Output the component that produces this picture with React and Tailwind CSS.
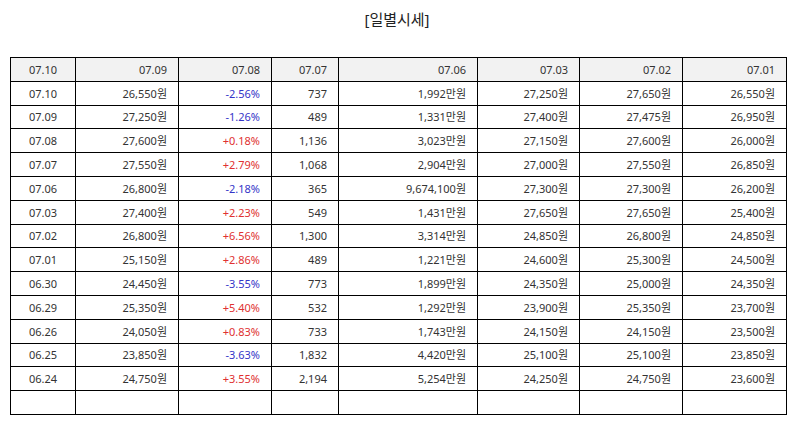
const header = ["07.10", "07.09", "07.08", "07.07", "07.06", "07.03", "07.02", "07.01"];

const rows = [
  ["07.10", "26,550원", "-2.56%", "737", "1,992만원", "27,250원", "27,650원", "26,550원"],
  ["07.09", "27,250원", "-1.26%", "489", "1,331만원", "27,400원", "27,475원", "26,950원"],
  ["07.08", "27,600원", "+0.18%", "1,136", "3,023만원", "27,150원", "27,600원", "26,000원"],
  ["07.07", "27,550원", "+2.79%", "1,068", "2,904만원", "27,000원", "27,550원", "26,850원"],
  ["07.06", "26,800원", "-2.18%", "365", "9,674,100원", "27,300원", "27,300원", "26,200원"],
  ["07.03", "27,400원", "+2.23%", "549", "1,431만원", "27,650원", "27,650원", "25,400원"],
  ["07.02", "26,800원", "+6.56%", "1,300", "3,314만원", "24,850원", "26,800원", "24,850원"],
  ["07.01", "25,150원", "+2.86%", "489", "1,221만원", "24,600원", "25,300원", "24,500원"],
  ["06.30", "24,450원", "-3.55%", "773", "1,899만원", "24,350원", "25,000원", "24,350원"],
  ["06.29", "25,350원", "+5.40%", "532", "1,292만원", "23,900원", "25,350원", "23,700원"],
  ["06.26", "24,050원", "+0.83%", "733", "1,743만원", "24,150원", "24,150원", "23,500원"],
  ["06.25", "23,850원", "-3.63%", "1,832", "4,420만원", "25,100원", "25,100원", "23,850원"],
  ["06.24", "24,750원", "+3.55%", "2,194", "5,254만원", "24,250원", "24,750원", "23,600원"],
];

const widths = [65, 103, 93, 67, 139, 102, 103, 104];

function Cell({ children, first, className = "" }) {
  return (
    <td
      className={`border border-black px-[11px] whitespace-nowrap ${
        first ? "text-center" : "text-right"
      } ${className}`}>
      {children}
    </td>
  );
}

export default function App() {
  return (
    <div
      className="w-[794px] h-[425px] bg-white px-[10px] text-[11px] text-[#333]"
      style={{ fontFamily: '"Noto Sans", "Noto Sans CJK KR", sans-serif' }}>
      <h2 className="pt-[8px] h-[57px] text-center text-[15px] leading-[22px] text-[#222]">
        [일별시세]
      </h2>
      <table className="table-fixed border-collapse w-[776px]">
        <colgroup>
          {widths.map((w, i) => (
            <col key={i} style={{ width: w }} />
          ))}
        </colgroup>
        <thead>
          <tr className="h-[23.8px] bg-[#f2f2f2] leading-none">
            {header.map((h, i) => (
              <Cell key={i} first={i === 0}>
                {h}
              </Cell>
            ))}
          </tr>
        </thead>
        <tbody>
          {rows.map((r, ri) => (
            <tr key={ri} className="h-[23.8px] leading-none">
              {r.map((v, i) => (
                <Cell
                  key={i}
                  first={i === 0}
                  className={
                    i === 2
                      ? v.startsWith("-")
                        ? "text-[#3535c8]"
                        : "text-[#e03131]"
                      : ""
                  }>
                  {v}
                </Cell>
              ))}
            </tr>
          ))}
          <tr className="h-[23.8px]">
            {widths.map((_, i) => (
              <Cell key={i} first={i === 0} />
            ))}
          </tr>
        </tbody>
      </table>
    </div>
  );
}
